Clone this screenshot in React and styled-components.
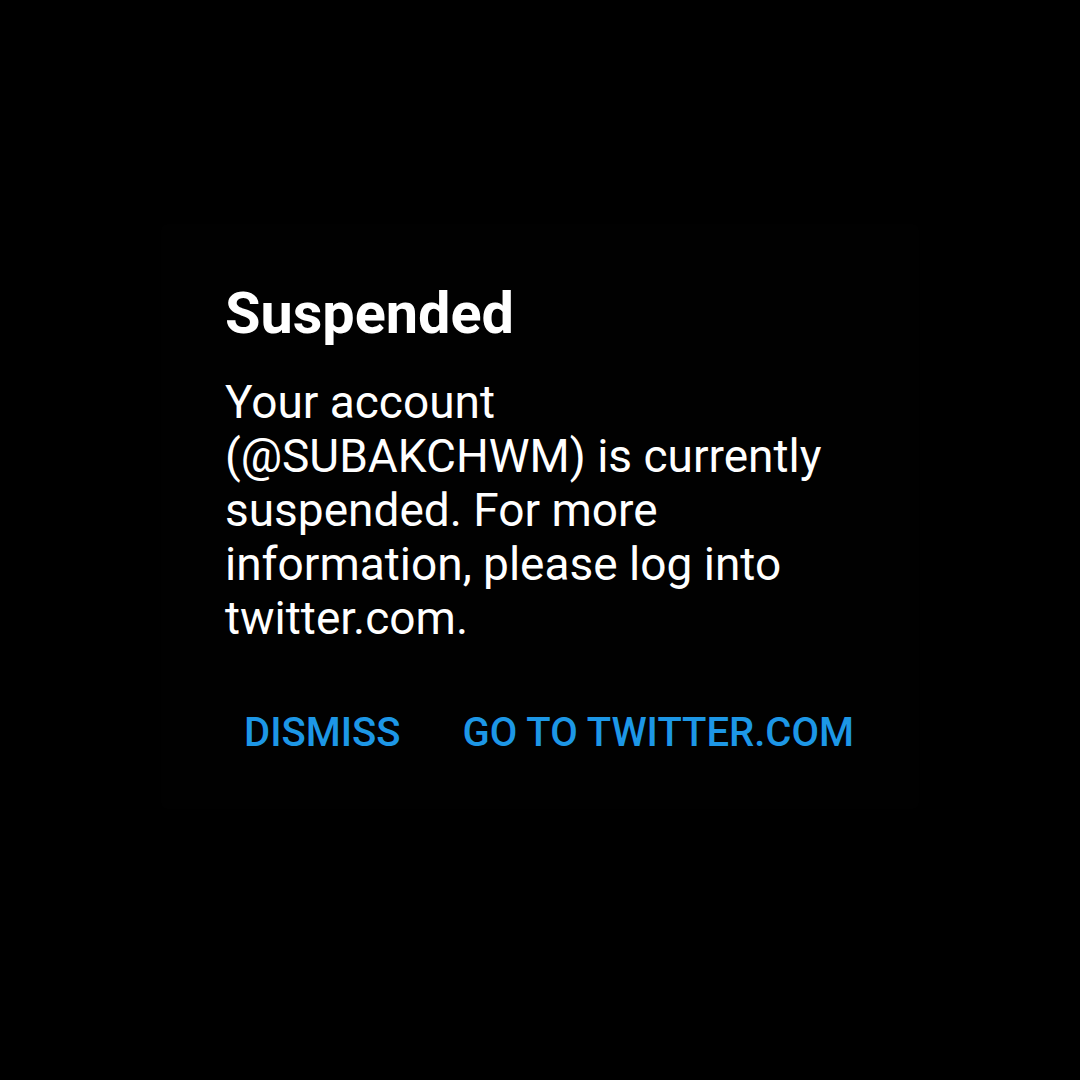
import React from "react";
import styled, { createGlobalStyle } from "styled-components";

const GlobalStyle = createGlobalStyle`
  html, body {
    margin: 0;
    padding: 0;
    background: #000;
  }
  body {
    font-family: Roboto, "Noto Sans", "Liberation Sans", sans-serif;
  }
`;

const Screen = styled.main`
  width: 1080px;
  height: 1080px;
  background: #000;
  display: flex;
  flex-direction: column;
  align-items: center;
  padding-top: 224px;
  box-sizing: border-box;
`;

const Dialog = styled.section`
  width: 758px;
  box-sizing: border-box;
  padding: 56px 65px 49px 64px;
  background: #010101;
  border-radius: 6px;
  display: flex;
  flex-direction: column;
`;

const Title = styled.h2`
  margin: 0;
  font-size: 57.6px;
  line-height: 68px;
  font-weight: 700;
  color: #fff;
`;

const Message = styled.p`
  margin: 27px 0 0;
  font-size: 46px;
  line-height: 54px;
  font-weight: 400;
  color: #fff;
  max-width: 615px;
`;

const Actions = styled.div`
  display: flex;
  justify-content: flex-end;
  gap: 62px;
  margin-top: 61px;
`;

const ActionButton = styled.button`
  background: none;
  border: none;
  padding: 0;
  font-family: inherit;
  font-size: 40px;
  line-height: 54px;
  font-weight: 500;
  color: #1d97e6;
  text-transform: uppercase;
  cursor: pointer;
`;

export default function App() {
  return (
    <>
      <GlobalStyle />
      <Screen>
        <Dialog>
          <Title>Suspended</Title>
          <Message>
            Your account (@SUBAKCHWM) is currently suspended. For more
            information, please log into twitter.com.
          </Message>
          <Actions>
            <ActionButton>Dismiss</ActionButton>
            <ActionButton>Go to twitter.com</ActionButton>
          </Actions>
        </Dialog>
      </Screen>
    </>
  );
}
